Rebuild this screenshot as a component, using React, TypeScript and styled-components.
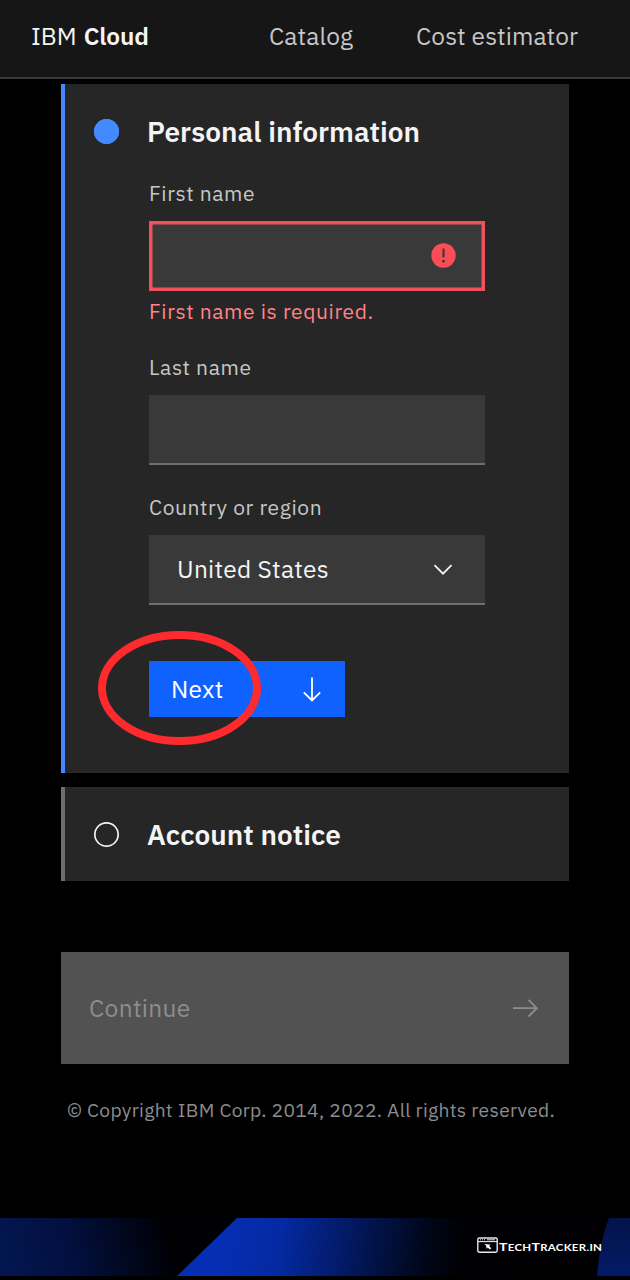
import React from "react";
import styled, { createGlobalStyle } from "styled-components";

const GlobalStyle = createGlobalStyle`
  *, *::before, *::after { box-sizing: border-box; }
  html, body { margin: 0; padding: 0; background: #000; }
  body { font-family: "IBM Plex Sans", "Open Sans", sans-serif; color: #f4f4f4; }
  button, input { font: inherit; }
`;

const Page = styled.div`
  display: flex;
  flex-direction: column;
  width: 630px;
  height: 1280px;
  overflow: hidden;
  background: #000;
`;

const Header = styled.header`
  display: flex;
  align-items: center;
  flex: none;
  height: 79px;
  padding: 0 0 5px 31px;
  background: #161616;
  border-bottom: 2px solid #393939;
`;

const Text = styled.span<{ $spacing?: number }>`
  letter-spacing: ${(p) => p.$spacing ?? 0}px;
  white-space: nowrap;
`;

const Brand = styled.div`
  display: flex;
  gap: 7px;
  width: 238px;
  font-size: 24.5px;
  line-height: 34px;
`;

const BrandName = styled(Text)`
  font-weight: 600;
`;

const Nav = styled.nav`
  display: grid;
  grid-template-columns: 147px auto;
  font-size: 24.5px;
  line-height: 34px;
  color: #c6c6c6;
`;

const Main = styled.main`
  display: flex;
  flex-direction: column;
  flex: none;
  width: 508px;
  margin: 5px 0 0 61px;
`;

const Panel = styled.section<{ $active?: boolean; $height: number }>`
  height: ${(p) => p.$height}px;
  padding: 26px 0 0 29px;
  background: #262626;
  border-left: 4px solid ${(p) => (p.$active ? "#4589ff" : "#6f6f6f")};
  & + & { margin-top: 14px; }
`;

const PanelHeading = styled.div`
  display: flex;
  align-items: center;
  height: 43px;
`;

const StepDot = styled.span<{ $filled?: boolean }>`
  width: 25px;
  height: 25px;
  margin-right: 28px;
  border-radius: 50%;
  background: ${(p) => (p.$filled ? "#4589ff" : "transparent")};
  box-shadow: inset 0 0 0 1.7px ${(p) => (p.$filled ? "#4589ff" : "#f4f4f4")};
`;

const Title = styled.h2`
  margin: 0;
  font-size: 28px;
  font-weight: 600;
  line-height: 38px;
  letter-spacing: 0.05px;
  white-space: nowrap;
`;

const Form = styled.form`
  display: flex;
  flex-direction: column;
  width: 336px;
  margin: 22px 0 0 55px;
`;

const Field = styled.div<{ $gap: number }>`
  display: flex;
  flex-direction: column;
  margin-bottom: ${(p) => p.$gap}px;
`;

const Label = styled.label`
  height: 46px;
  padding-top: 4px;
  font-size: 21px;
  line-height: 28px;
  letter-spacing: 0.6px;
  color: #c6c6c6;
`;

const Control = styled.div<{ $invalid?: boolean }>`
  display: flex;
  align-items: center;
  justify-content: space-between;
  height: 70px;
  padding: ${(p) => (p.$invalid ? "0 29px 1px" : "0 28px")};
  background: #393939;
  font-size: 24.5px;
  line-height: 34px;
  ${(p) =>
    p.$invalid
      ? "box-shadow: inset 0 0 0 3.5px #f0525b;"
      : "border-bottom: 2px solid #6f6f6f;"}
`;

const TextInput = styled.input`
  flex: 1;
  min-width: 0;
  border: 0;
  outline: 0;
  background: transparent;
  color: #f4f4f4;
`;

const ErrorText = styled.div`
  margin-top: 6px;
  height: 29px;
  font-size: 21px;
  line-height: 28px;
  letter-spacing: 0.6px;
  color: #ff8389;
`;

const Actions = styled.div`
  position: relative;
`;

const NextButton = styled.button`
  display: flex;
  align-items: center;
  justify-content: space-between;
  width: 196px;
  height: 56px;
  padding: 0 19px 1px 22px;
  border: 0;
  background: #0f62fe;
  color: #fff;
  font-size: 24.5px;
`;

const Highlight = styled.svg`
  position: absolute;
  left: -51px;
  top: -31px;
  pointer-events: none;
`;

const ContinueButton = styled.button`
  display: flex;
  align-items: center;
  justify-content: space-between;
  height: 112px;
  margin-top: 71px;
  padding: 0 30px 1px 28px;
  border: 0;
  background: #525252;
  color: #8d8d8d;
  font-size: 24.5px;
`;

const Copyright = styled.p`
  margin: 33px 0 0 6px;
  font-size: 19.25px;
  line-height: 26px;
  letter-spacing: 0.3px;
  white-space: nowrap;
  color: #8d8d8d;
`;

const Banner = styled.footer`
  display: grid;
  flex: none;
  width: 630px;
  height: 58px;
  margin: auto 0 4px;
  > * { grid-area: 1 / 1; }
`;

const Watermark = styled.div`
  display: flex;
  align-items: center;
  align-self: start;
  height: 18px;
  margin: 18px 0 0 477px;
  color: #fff;
`;

const WatermarkText = styled.span`
  margin: 4px 0 0 1px;
  font-family: Lato, sans-serif;
  font-weight: 700;
  font-size: 9.8px;
  line-height: 16px;
  letter-spacing: 0.25px;
  white-space: nowrap;
  transform: scaleX(1.17);
  transform-origin: left;
`;

const Cap = styled.span`
  font-size: 12px;
`;

const ErrorIcon = () => (
  <svg width="25" height="25" viewBox="0 0 25 25">
    <circle cx="12.5" cy="12.5" r="12.2" fill="#fa4d56" />
    <path d="M12.5 5.6v8.7" stroke="#393939" strokeWidth="2.1" />
    <circle cx="12.5" cy="18.2" r="1.4" fill="#393939" />
  </svg>
);

const Chevron = () => (
  <svg width="28" height="28" viewBox="0 0 28 28" fill="none" stroke="#f4f4f4" strokeWidth="1.8">
    <path d="M5.5 10.2l8.5 8.5 8.5-8.5" />
  </svg>
);

const ArrowDown = () => (
  <svg width="28" height="28" viewBox="0 0 28 28" fill="none" stroke="#fff" strokeWidth="1.8">
    <path d="M14 2.5v23M5.8 17.3l8.2 8.2 8.2-8.2" />
  </svg>
);

const ArrowRight = () => (
  <svg width="27" height="28" viewBox="0 0 27 28" fill="none" stroke="#8d8d8d" strokeWidth="1.8">
    <path d="M1 14.2h23.5M16.5 5.9l8.3 8.3-8.3 8.3" />
  </svg>
);

const BannerArt = () => (
  <svg width="630" height="58" viewBox="0 0 630 58">
    <defs>
      <linearGradient id="left" gradientUnits="userSpaceOnUse" x1="0" y1="40" x2="165" y2="0">
        <stop offset="0" stopColor="#031650" />
        <stop offset="0.4" stopColor="#021040" />
        <stop offset="1" stopColor="#000003" />
      </linearGradient>
      <linearGradient id="beam" gradientUnits="userSpaceOnUse" x1="220" y1="30" x2="460" y2="60">
        <stop offset="0" stopColor="#062eb4" />
        <stop offset="0.25" stopColor="#0429a0" />
        <stop offset="0.6" stopColor="#021450" />
        <stop offset="0.85" stopColor="#000617" />
        <stop offset="1" stopColor="#000004" />
      </linearGradient>
      <linearGradient id="right" x1="0" y1="0" x2="0" y2="1">
        <stop offset="0" stopColor="#03134a" />
        <stop offset="1" stopColor="#041a66" />
      </linearGradient>
    </defs>
    <rect width="630" height="58" fill="#000003" />
    <path d="M0 0h180v58H0z" fill="url(#left)" />
    <path d="M237 0h260v58H177z" fill="url(#beam)" />
    <path d="M609 0h21v58h-33q3-36 12-58z" fill="url(#right)" />
  </svg>
);

const BrowserIcon = () => (
  <svg width="21" height="18" viewBox="0 0 21 18" fill="none" stroke="#e8e8e8">
    <rect x="0.8" y="2" width="19.4" height="14.2" rx="1.6" strokeWidth="1.4" />
    <path d="M1 5.6h19" strokeWidth="1.1" />
    <path d="M3 3.8h1M5 3.8h1M7 3.8h1M10 3.8h8" strokeWidth="1" />
    <path d="M7.3 8l6.5.7-1.7 1.3 2.1 2.2-1.3 1.4-2.2-2.2-1.1 1.7-.4-3.4z" fill="#fff" stroke="none" />
  </svg>
);

export default function App() {
  return (
    <Page>
      <GlobalStyle />
      <Header>
        <Brand>
          <Text>IBM</Text>
          <BrandName $spacing={-0.15}>Cloud</BrandName>
        </Brand>
        <Nav>
          <Text $spacing={0.1}>Catalog</Text>
          <Text $spacing={0.1}>Cost estimator</Text>
        </Nav>
      </Header>
      <Main>
        <Panel $active $height={689}>
          <PanelHeading>
            <StepDot $filled />
            <Title>Personal information</Title>
          </PanelHeading>
          <Form>
            <Field $gap={23}>
              <Label htmlFor="first">First name</Label>
              <Control $invalid>
                <TextInput id="first" />
                <ErrorIcon />
              </Control>
              <ErrorText>First name is required.</ErrorText>
            </Field>
            <Field $gap={24}>
              <Label htmlFor="last">Last name</Label>
              <Control>
                <TextInput id="last" />
              </Control>
            </Field>
            <Field $gap={56}>
              <Label>Country or region</Label>
              <Control>
                <Text $spacing={0.28}>United States</Text>
                <Chevron />
              </Control>
            </Field>
            <Actions>
              <NextButton type="button">
                <Text $spacing={0.28}>Next</Text>
                <ArrowDown />
              </NextButton>
              <Highlight width="164" height="116" viewBox="0 0 164 116">
                <ellipse cx="81.5" cy="58" rx="77.5" ry="53" fill="none" stroke="#ff2a2d" strokeWidth="8" />
              </Highlight>
            </Actions>
          </Form>
        </Panel>
        <Panel $height={94}>
          <PanelHeading>
            <StepDot />
            <Title>Account notice</Title>
          </PanelHeading>
        </Panel>
        <ContinueButton disabled>
          <Text $spacing={0.35}>Continue</Text>
          <ArrowRight />
        </ContinueButton>
        <Copyright>© Copyright IBM Corp. 2014, 2022. All rights reserved.</Copyright>
      </Main>
      <Banner>
        <BannerArt />
        <Watermark>
          <BrowserIcon />
          <WatermarkText>
            <Cap>T</Cap>ECH<Cap>T</Cap>RACKER.IN
          </WatermarkText>
        </Watermark>
      </Banner>
    </Page>
  );
}
